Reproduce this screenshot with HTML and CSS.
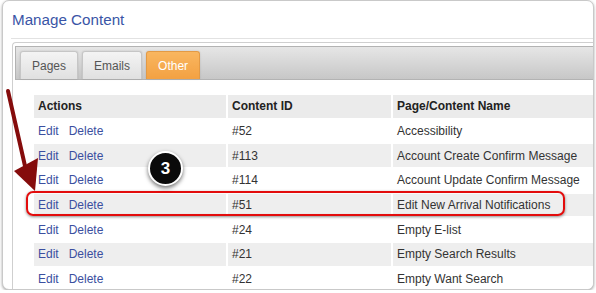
FILE: index.html
```html
<!DOCTYPE html>
<html lang="en">
<head>
    <meta charset="UTF-8">
    <meta name="viewport" content="width=device-width, initial-scale=1.0">
    <title>Manage Content</title>
    <link rel="stylesheet" href="styles.css">
</head>
<body>
    <div class="frame">
        <h1>Manage Content</h1>
        <div class="title-rule"></div>

        <div class="panel">
            <div class="tab-bar">
                <span class="tab">Pages</span>
                <span class="tab">Emails</span>
                <span class="tab active">Other</span>
            </div>

            <table class="content-table">
                <tr>
                    <th class="col-actions">Actions</th>
                    <th class="col-id">Content ID</th>
                    <th class="col-name">Page/Content Name</th>
                </tr>
                <tr>
                    <td><a href="#">Edit</a><a href="#">Delete</a></td>
                    <td>#52</td>
                    <td>Accessibility</td>
                </tr>
                <tr>
                    <td><a href="#">Edit</a><a href="#">Delete</a></td>
                    <td>#113</td>
                    <td>Account Create Confirm Message</td>
                </tr>
                <tr>
                    <td><a href="#">Edit</a><a href="#">Delete</a></td>
                    <td>#114</td>
                    <td>Account Update Confirm Message</td>
                </tr>
                <tr>
                    <td><a href="#">Edit</a><a href="#">Delete</a></td>
                    <td>#51</td>
                    <td>Edit New Arrival Notifications</td>
                </tr>
                <tr>
                    <td><a href="#">Edit</a><a href="#">Delete</a></td>
                    <td>#24</td>
                    <td>Empty E-list</td>
                </tr>
                <tr>
                    <td><a href="#">Edit</a><a href="#">Delete</a></td>
                    <td>#21</td>
                    <td>Empty Search Results</td>
                </tr>
                <tr>
                    <td><a href="#">Edit</a><a href="#">Delete</a></td>
                    <td>#22</td>
                    <td>Empty Want Search</td>
                </tr>
            </table>
        </div>
    </div>

    <!-- annotation layer -->
    <div class="highlight"></div>
    <div class="step-badge">3</div>
    <svg class="arrow" width="60" height="200" viewBox="0 0 60 200">
        <line x1="8" y1="91" x2="25" y2="166" stroke="#850c0c" stroke-width="4" stroke-linecap="round"/>
        <polygon points="14,171 38,158 35,191" fill="#850c0c"/>
    </svg>
</body>
</html>
```

FILE: styles.css
```css
* {
    box-sizing: border-box;
}

body {
    margin: 0;
    position: relative;
    background: #fff;
    font-family: "Liberation Sans", Arial, sans-serif;
    color: #333;
}

.frame {
    margin: 0 2px;
    height: 290px;
    border: 1px solid #c9c9c9;
    border-radius: 7px;
    box-shadow: 0 1px 3px rgba(0, 0, 0, 0.35);
    overflow: hidden;
    padding-left: 9px;
    background: #fff;
}

h1 {
    margin: 0;
    padding-top: 10px;
    height: 37px;
    font-size: 15.2px;
    font-weight: normal;
    color: #3a55a6;
}

.title-rule {
    margin-left: -1px;
    border-top: 1px solid #e2e2e2;
    height: 4px;
}

.panel {
    border-top: 1px solid #cfcfcf;
    border-left: 1px solid #cfcfcf;
    border-top-left-radius: 4px;
    padding: 3px 0 0 2px;
    height: 260px;
}

.tab-bar {
    display: flex;
    align-items: flex-end;
    gap: 4px;
    height: 34px;
    padding-left: 4px;
    border: 1px solid #b3b3b3;
    border-right: none;
    background: linear-gradient(#e6e6e6, #c7c7c7);
}

.tab {
    height: 28px;
    line-height: 28px;
    padding: 0 11px;
    font-size: 12px;
    color: #555;
    border: 1px solid #c6c6c6;
    border-bottom: none;
    border-radius: 3px 3px 0 0;
    background: linear-gradient(#f4f4f4, #e0e0e0);
    box-shadow: 0 0 2px rgba(0, 0, 0, 0.15);
}

.tab.active {
    color: #fff;
    border-color: #e39a45;
    background: linear-gradient(#f9b660, #f3a142);
}

.content-table {
    margin: 13px 0 0 17px;
    width: 620px;
    border-collapse: separate;
    border-spacing: 2px;
    font-size: 12px;
}

.content-table th,
.content-table td {
    height: 22.7px;
    padding: 0 4px;
    text-align: left;
    white-space: nowrap;
}

.content-table th {
    background: #ebebeb;
    color: #222;
}

.content-table tr:nth-child(even) td {
    background: #fff;
}

.content-table tr:nth-child(odd) td {
    background: #eeeeee;
}

.col-actions {
    width: 192px;
}

.col-id {
    width: 163px;
}

.content-table a {
    color: #3b4fa0;
    text-decoration: none;
}

.content-table a + a {
    margin-left: 10px;
}

.highlight {
    position: absolute;
    left: 26px;
    top: 191px;
    width: 539px;
    height: 25px;
    border: 2.5px solid #e30c0c;
    border-radius: 7px;
    box-shadow: 0 1px 3px rgba(0, 0, 0, 0.45), inset 0 0 1px rgba(0, 0, 0, 0.2);
}

.step-badge {
    position: absolute;
    left: 148px;
    top: 151px;
    width: 35px;
    height: 35px;
    border: 2px solid #fff;
    border-radius: 50%;
    background: #0a0a0a;
    color: #fff;
    font-size: 17px;
    font-weight: bold;
    line-height: 31px;
    text-align: center;
    box-shadow: 0 2px 4px rgba(0, 0, 0, 0.55);
}

.arrow {
    position: absolute;
    left: 0;
    top: 0;
}
```
